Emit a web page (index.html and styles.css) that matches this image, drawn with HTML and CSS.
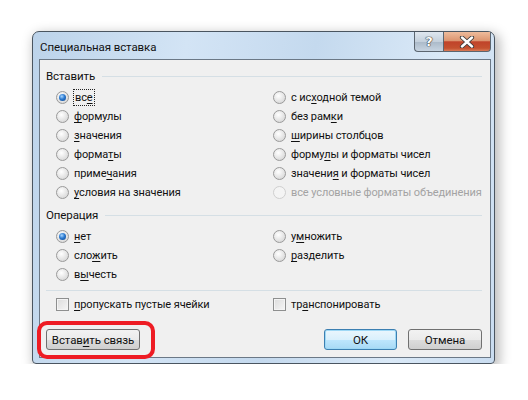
FILE: index.html
```html
<!DOCTYPE html>
<html lang="ru">
<head>
  <meta charset="UTF-8">
  <title>Специальная вставка</title>
  <link rel="stylesheet" href="styles.css">
</head>
<body>

  <div class="window">
    <div class="titlebar">
      <span class="title">Специальная вставка</span>
      <div class="caption-buttons">
        <div class="cap-btn help">?</div>
        <div class="cap-btn close">
          <svg width="16" height="12" viewBox="0 0 16 12">
            <path d="M3 1.5 L13 10.5 M13 1.5 L3 10.5" stroke="#3b3b3b" stroke-width="4.2" stroke-linecap="round"/>
            <path d="M3 1.5 L13 10.5 M13 1.5 L3 10.5" stroke="#fff" stroke-width="2.4" stroke-linecap="round"/>
          </svg>
        </div>
      </div>
    </div>

    <div class="client">
      <div class="group-head"><span>Вставить</span><div class="rule"></div></div>
      <div class="options paste">
        <label class="opt"><span class="radio on"></span><span class="focus">вс<u>е</u></span></label>
        <label class="opt"><span class="radio"></span>с ис<u>х</u>одной темой</label>
        <label class="opt"><span class="radio"></span><u>ф</u>ормулы</label>
        <label class="opt"><span class="radio"></span>без рам<u>к</u>и</label>
        <label class="opt"><span class="radio"></span><u>з</u>начения</label>
        <label class="opt"><span class="radio"></span><u>ш</u>ирины столбцов</label>
        <label class="opt"><span class="radio"></span>форма<u>т</u>ы</label>
        <label class="opt"><span class="radio"></span>форму<u>л</u>ы и форматы чисел</label>
        <label class="opt"><span class="radio"></span>приме<u>ч</u>ания</label>
        <label class="opt"><span class="radio"></span><span>значени<u>я</u>&nbsp;и форматы чисел</span></label>
        <label class="opt"><span class="radio"></span><u>у</u>словия на значения</label>
        <label class="opt disabled"><span class="radio"></span>все условные форматы объединения</label>
      </div>

      <div class="group-head op"><span>Операция</span><div class="rule"></div></div>
      <div class="options">
        <label class="opt"><span class="radio on"></span><u>н</u>ет</label>
        <label class="opt"><span class="radio"></span>у<u>м</u>ножить</label>
        <label class="opt"><span class="radio"></span>сло<u>ж</u>ить</label>
        <label class="opt"><span class="radio"></span><u>р</u>азделить</label>
        <label class="opt"><span class="radio"></span>в<u>ы</u>честь</label>
      </div>

      <div class="separator"></div>
      <div class="options checks">
        <label class="opt"><span class="check"></span><u>п</u>ропускать пустые ячейки</label>
        <label class="opt"><span class="check"></span>тр<u>а</u>нспонировать</label>
      </div>

      <div class="buttons">
        <div class="btn-wrap">
          <button class="btn link">Встав<u>и</u>ть связь</button>
          <div class="highlight"></div>
        </div>
        <div class="spacer"></div>
        <button class="btn ok">ОК</button>
        <button class="btn cancel">Отмена</button>
      </div>
    </div>
  </div>

</body>
</html>
```

FILE: styles.css
```css
body {
  margin: 0;
  background: #fff;
  font-family: Roboto, "Liberation Sans", sans-serif;
  font-size: 11px;
  letter-spacing: -0.1px;
  color: #111;
}

.window {
  margin: 31px 0 0 32px;
  width: 452px;
  height: 326px;
  padding: 0 3px 5px 6px;
  border: 1px solid #4a5560;
  border-radius: 7px 7px 4px 4px;
  background: linear-gradient(100deg, #bcd3ea 0%, #d3e4f5 30%, #c4d9ee 55%, #dae9f7 80%, #c9dcf0 100%);
  box-shadow: 3px 4px 12px 2px rgba(0, 0, 0, 0.26);
  display: flex;
  flex-direction: column;
}

.titlebar {
  height: 27px;
  display: flex;
  align-items: flex-start;
}

.title {
  margin-top: 8px;
  margin-left: 1px;
  color: #111;
  font-size: 11.5px;
}

.caption-buttons {
  margin-left: auto;
  display: flex;
}

.cap-btn {
  height: 19px;
  border: 1px solid #5c6670;
  border-top: none;
  display: flex;
  align-items: center;
  justify-content: center;
}

.help {
  width: 28px;
  border-right: none;
  border-radius: 0 0 0 4px;
  background: linear-gradient(#dfe7ef, #c4d0dc 50%, #aab9c8 51%, #c7d4e1);
  color: #fff;
  font-family: "DejaVu Sans", sans-serif;
  font-weight: bold;
  font-size: 13px;
  text-shadow: 0 0 1px #333, 0 0 1px #333, 0 0 1px #333;
}

.close {
  width: 46px;
  border-radius: 0 0 4px 0;
  background: linear-gradient(#eebc9c, #dc9570 45%, #c0432a 52%, #c4512f 85%, #d97b58);
}

.client {
  flex: 1;
  background: #f0f0f0;
  border: 1px solid #6b7886;
  padding: 8px 8px 0 6px;
  display: flex;
  flex-direction: column;
}

.group-head {
  display: flex;
  align-items: center;
  height: 16px;
  font-size: 11.5px;
}

.group-head span {
  margin-right: 7px;
}

.rule {
  flex: 1;
  border-top: 1px solid #d5dfe5;
  margin-top: 1px;
}

.group-head.op {
  margin-top: 5px;
}

.options {
  display: grid;
  grid-template-columns: 217px 1fr;
  grid-auto-rows: 19px;
  margin-left: 10px;
  margin-top: 4px;
}

.opt {
  display: flex;
  align-items: center;
  white-space: pre;
}

.opt u {
  text-decoration-thickness: 1px;
  text-underline-offset: 2px;
}

.opt.disabled {
  color: #a3a3a3;
}

.radio {
  width: 11px;
  height: 11px;
  border-radius: 50%;
  border: 1px solid #9a9a9a;
  background: radial-gradient(circle at 40% 35%, #ffffff 0%, #e9e9e9 45%, #cfcfcf 100%);
  margin-right: 5px;
  position: relative;
  flex-shrink: 0;
}

.radio.on::after {
  content: "";
  position: absolute;
  left: 2px;
  top: 2px;
  width: 7px;
  height: 7px;
  border-radius: 50%;
  background: radial-gradient(circle at 40% 35%, #a9d6ff 0%, #2b7ad0 45%, #0b3f86 100%);
}

.disabled .radio {
  border-color: #cfcfcf;
  background: #f4f4f4;
}

.focus {
  outline: 1px dotted #222;
  outline-offset: 0;
  padding: 0 1px;
  line-height: 15px;
}

.separator {
  border-top: 1px solid #d5dfe5;
  margin-top: 6px;
}

.checks {
  margin-top: 4px;
}

.check {
  width: 11px;
  height: 11px;
  border: 1px solid #8e8f8f;
  background: linear-gradient(135deg, #dcdcdc, #f6f6f6);
  box-shadow: inset 0 0 0 1px #f4f4f4;
  margin-right: 5px;
  flex-shrink: 0;
}

.buttons {
  display: flex;
  margin-top: 15px;
}

.btn-wrap {
  position: relative;
}

.spacer {
  flex: 1;
}

.btn {
  height: 21px;
  font-family: inherit;
  font-size: 11.5px;
  letter-spacing: -0.1px;
  color: #111;
  border: 1px solid #707070;
  border-radius: 3px;
  background: linear-gradient(#f2f2f2 0%, #ebebeb 50%, #dddddd 51%, #cfcfcf 100%);
  padding: 0;
  display: block;
}

.btn u {
  text-underline-offset: 2px;
}

.link {
  width: 94px;
}

.ok {
  width: 73px;
  border-color: #3c7fb1;
  box-shadow: inset 0 0 0 1px #9ed8f5;
  background: linear-gradient(#eaf6fd 0%, #d9f0fc 50%, #bee6fd 51%, #a7d9f5 100%);
  margin-right: 11px;
}

.cancel {
  width: 74px;
}

.highlight {
  position: absolute;
  left: -9px;
  top: -8px;
  right: -15px;
  bottom: -9px;
  border: 4px solid #ee1c24;
  border-radius: 10px;
}
```
